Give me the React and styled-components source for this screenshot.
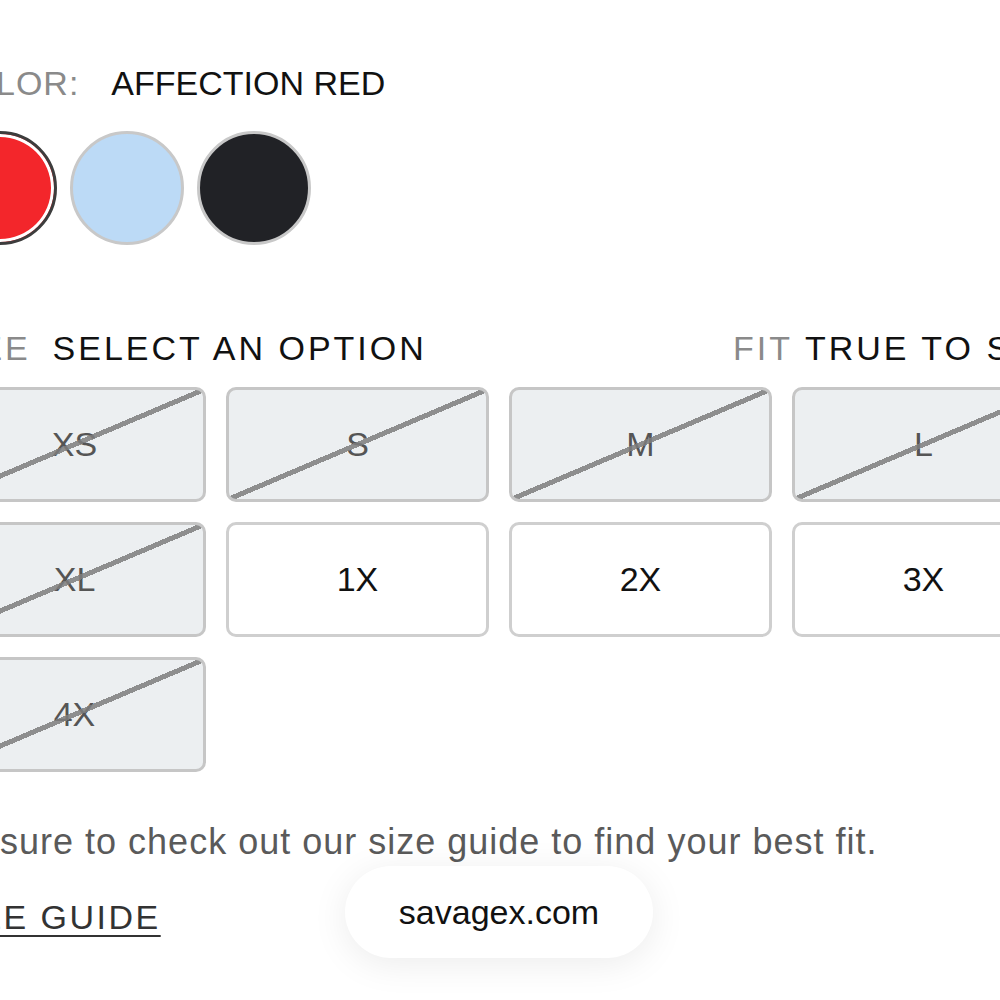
import React from 'react';
import styled, { createGlobalStyle } from 'styled-components';

const GlobalStyle = createGlobalStyle`
  html, body {
    margin: 0;
    padding: 0;
    background: #ffffff;
    overflow: hidden;
  }
  body {
    font-family: "Liberation Sans", Arial, sans-serif;
  }
`;

const Page = styled.div`
  position: relative;
  width: 1000px;
  height: 1000px;
  overflow: hidden;
  background: #ffffff;
`;

const Content = styled.div`
  width: 1112px;
  margin-left: -57px;
  padding-top: 64px;
  display: flex;
  flex-direction: column;
`;

const ColorHeader = styled.div`
  display: flex;
  gap: 32px;
  font-size: 34px;
  line-height: 38px;
`;

const Muted = styled.span`
  color: #8a8a8a;
  letter-spacing: ${(p) => p.$spacing || '1px'};
`;

const Strong = styled.span`
  color: #111111;
`;

const Swatches = styled.div`
  display: flex;
  gap: 13px;
  margin-top: 29px;
`;

const Swatch = styled.div`
  width: 114px;
  height: 114px;
  border-radius: 50%;
  box-sizing: border-box;
  background: ${(p) => p.$color};
  border: 3px solid ${(p) => (p.$selected ? '#3d3d3d' : '#c8c8c8')};
  box-shadow: ${(p) => (p.$selected ? 'inset 0 0 0 3px #ffffff' : 'none')};
`;

const SizeHeader = styled.div`
  display: flex;
  justify-content: space-between;
  margin-top: 84px;
  margin-right: -19px;
  font-size: 34px;
  line-height: 38px;
  letter-spacing: 3px;
`;

const HeaderGroup = styled.div`
  display: flex;
  gap: ${(p) => p.$gap || '22px'};
`;

const Grid = styled.div`
  display: grid;
  grid-template-columns: repeat(4, 263px);
  grid-auto-rows: 115px;
  column-gap: 20px;
  row-gap: 20px;
  margin-top: 20px;
`;

const SizeButton = styled.div`
  position: relative;
  box-sizing: border-box;
  border: 3px solid ${(p) => (p.$disabled ? '#c6c6c6' : '#cfcfcf')};
  border-radius: 10px;
  background: ${(p) => (p.$disabled ? '#eceff1' : '#ffffff')};
  color: ${(p) => (p.$disabled ? '#555555' : '#111111')};
  display: flex;
  align-items: center;
  justify-content: center;
  font-size: 34px;
  overflow: hidden;

  &::after {
    content: '';
    display: ${(p) => (p.$disabled ? 'block' : 'none')};
    position: absolute;
    inset: 0;
    background: linear-gradient(
      to bottom right,
      transparent calc(50% - 2.5px),
      rgba(125, 125, 125, 0.85) calc(50% - 2.5px),
      rgba(125, 125, 125, 0.85) calc(50% + 2.5px),
      transparent calc(50% + 2.5px)
    );
  }
`;

const Note = styled.p`
  margin: 50px 0 0;
  font-size: 36px;
  line-height: 40px;
  color: #5a5a5a;
  letter-spacing: 1px;
`;

const GuideLink = styled.a`
  margin-top: 36px;
  align-self: flex-start;
  font-size: 34px;
  line-height: 38px;
  color: #333333;
  letter-spacing: 2.5px;
  text-decoration: underline;
  text-underline-offset: 6px;
  text-decoration-thickness: 2px;
`;

const UrlPill = styled.div`
  position: absolute;
  left: 345px;
  top: 866px;
  width: 308px;
  height: 92px;
  border-radius: 46px;
  background: #ffffff;
  box-shadow: 0 6px 36px rgba(0, 0, 0, 0.08);
  display: flex;
  align-items: center;
  justify-content: center;
  font-size: 34px;
  color: #111111;
`;

const sizes = [
  { label: 'XS', disabled: true },
  { label: 'S', disabled: true },
  { label: 'M', disabled: true },
  { label: 'L', disabled: true },
  { label: 'XL', disabled: true },
  { label: '1X', disabled: false },
  { label: '2X', disabled: false },
  { label: '3X', disabled: false },
  { label: '4X', disabled: true },
];

const App = () => (
  <Page>
    <GlobalStyle />
    <Content>
      <ColorHeader>
        <Muted>COLOR:</Muted>
        <Strong>AFFECTION RED</Strong>
      </ColorHeader>

      <Swatches>
        <Swatch $color="#f3262b" $selected />
        <Swatch $color="#bcdaf6" />
        <Swatch $color="#212226" />
      </Swatches>

      <SizeHeader>
        <HeaderGroup>
          <Muted $spacing="3px">SIZE</Muted>
          <Strong>SELECT AN OPTION</Strong>
        </HeaderGroup>
        <HeaderGroup $gap="12px">
          <Muted $spacing="3px">FIT</Muted>
          <Strong>TRUE TO SIZE</Strong>
        </HeaderGroup>
      </SizeHeader>

      <Grid>
        {sizes.map((s) => (
          <SizeButton key={s.label} $disabled={s.disabled}>
            {s.label}
          </SizeButton>
        ))}
      </Grid>

      <Note>Be sure to check out our size guide to find your best fit.</Note>
      <GuideLink>SIZE GUIDE</GuideLink>
    </Content>

    <UrlPill>savagex.com</UrlPill>
  </Page>
);

export default App;
